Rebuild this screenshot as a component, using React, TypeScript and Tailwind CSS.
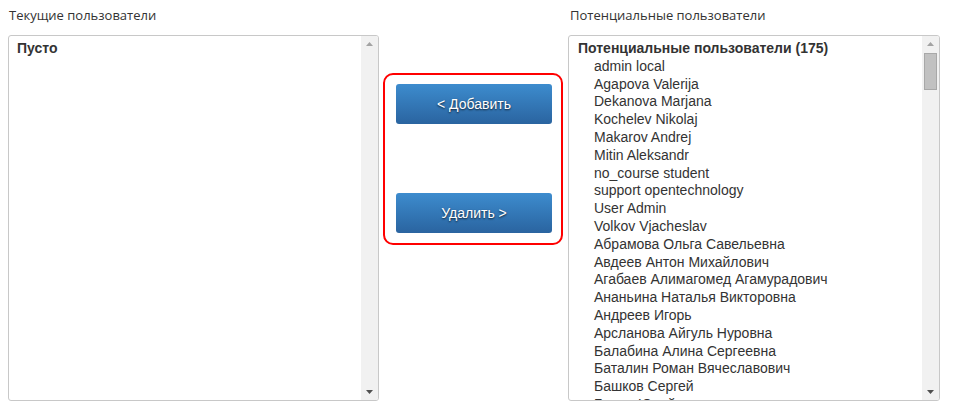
import React from "react";

const names = [
  "admin local",
  "Agapova Valerija",
  "Dekanova Marjana",
  "Kochelev Nikolaj",
  "Makarov Andrej",
  "Mitin Aleksandr",
  "no_course student",
  "support opentechnology",
  "User Admin",
  "Volkov Vjacheslav",
  "Абрамова Ольга Савельевна",
  "Авдеев Антон Михайлович",
  "Агабаев Алимагомед Агамурадович",
  "Ананьина Наталья Викторовна",
  "Андреев Игорь",
  "Арсланова Айгуль Нуровна",
  "Балабина Алина Сергеевна",
  "Баталин Роман Вячеславович",
  "Башков Сергей",
  "Белов Юрий",
];

function Scrollbar({ thumb }: { thumb?: boolean }) {
  return (
    <div className="relative w-[17px] h-full bg-[#f1f1f1] shrink-0">
      <svg className="absolute left-[5px] top-[6px]" width="7" height="4" viewBox="0 0 7 4">
        <polygon points="3.5,0 7,4 0,4" fill="#a3a3a3" />
      </svg>
      {thumb && (
        <div className="absolute left-[2px] top-[17px] w-[13px] h-[37px] bg-[#c1c1c1] border border-[#a8a8a8]" />
      )}
      <svg className="absolute left-[5px] bottom-[6px]" width="7" height="4" viewBox="0 0 7 4">
        <polygon points="0,0 7,0 3.5,4" fill="#505050" />
      </svg>
    </div>
  );
}

const btn =
  "w-[156px] h-[40px] rounded-[3px] bg-gradient-to-b from-[#3d8cce] to-[#2a64a0] text-white text-[14px] flex items-center justify-center [text-shadow:0_1px_2px_rgba(0,0,0,0.75)]";

export default function App() {
  return (
    <div className="w-[956px] h-[413px] bg-white flex pl-[8px] pt-[6px] text-[#333] [font-family:'Liberation_Sans',Arial,sans-serif]">
      <div className="w-[371px] flex flex-col">
        <div className="text-[13px] leading-[18px] pl-[1px] mb-[11px] [font-family:'Open_Sans',sans-serif]">
          Текущие пользователи
        </div>
        <div className="h-[366px] border border-[#c8c8c8] rounded-[3px] flex overflow-hidden">
          <div className="flex-1 pl-[8px] pt-[4px] text-[14px] leading-[17.8px]">
            <div className="font-bold">Пусто</div>
          </div>
          <Scrollbar />
        </div>
      </div>

      <div className="ml-[4px] mr-[5px] pt-[67px]">
        <div className="w-[180px] border-2 border-[#ff0000] rounded-[10px] px-[11px] pt-[9px] pb-[10px] flex flex-col gap-[69px] [font-family:'Liberation_Sans',Arial,sans-serif]">
          <div className={btn}>&lt; Добавить</div>
          <div className={btn}>Удалить &gt;</div>
        </div>
      </div>

      <div className="w-[372px] flex flex-col">
        <div className="text-[13px] leading-[18px] pl-[2px] mb-[11px] [font-family:'Open_Sans',sans-serif]">
          Потенциальные пользователи
        </div>
        <div className="h-[366px] border border-[#c8c8c8] rounded-[3px] flex overflow-hidden">
          <div className="flex-1 pl-[9px] pt-[4px] text-[14px] leading-[17.8px] overflow-hidden">
            <div className="font-bold">Потенциальные пользователи (175)</div>
            {names.map((n) => (
              <div key={n} className="pl-[16px] whitespace-nowrap">
                {n}
              </div>
            ))}
          </div>
          <Scrollbar thumb />
        </div>
      </div>
    </div>
  );
}
